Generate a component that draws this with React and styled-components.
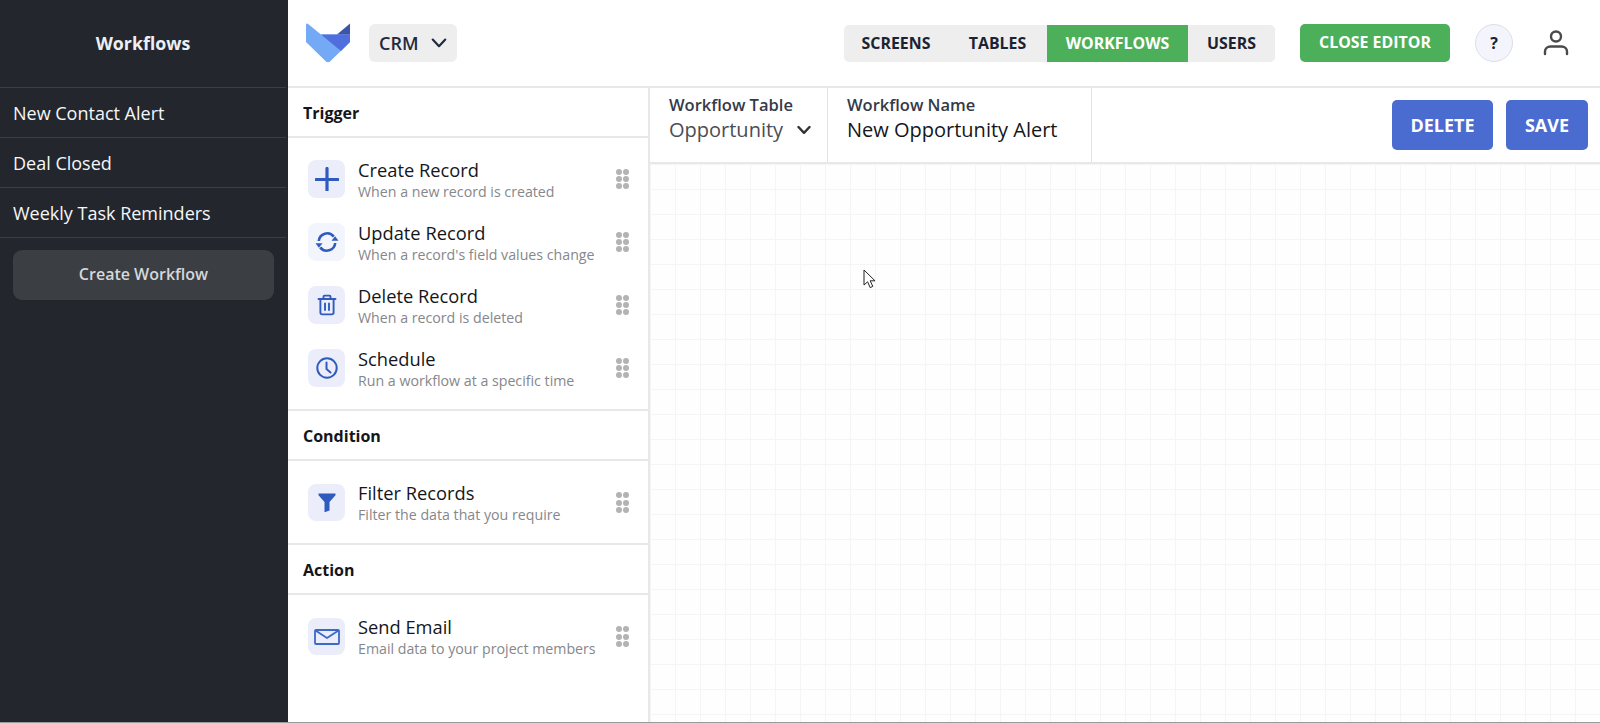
import React from "react";
import styled, { createGlobalStyle } from "styled-components";

const GlobalStyle = createGlobalStyle`
  html, body { margin: 0; padding: 0; height: 100%; background: #fff; }
  body { font-family: "Open Sans", "Liberation Sans", sans-serif; overflow: hidden; }
  * { box-sizing: border-box; }
`;

const Page = styled.div`
  display: flex;
  width: 1600px;
  height: 723px;
  border-bottom: 1px solid #9b9b9b;
`;

const Sidebar = styled.aside`
  width: 288px;
  flex-shrink: 0;
  background: #23262d;
  color: #fff;
`;

const SidebarTitle = styled.div`
  height: 88px;
  padding-bottom: 2px;
  display: flex;
  align-items: center;
  justify-content: center;
  font-size: 17.8px;
  font-weight: 700;
  color: #eceff4;
  border-bottom: 1px solid #3a3e45;
  margin-right: 2px;
`;

const SidebarItem = styled.div`
  height: 50px;
  padding: 0 13px;
  display: flex;
  align-items: center;
  font-size: 18px;
  color: #f5f6f8;
  border-bottom: 1px solid #3a3e45;
  margin-right: 2px;
`;

const CreateButton = styled.div`
  height: 50px;
  margin: 12px 14px 0 13px;
  padding-bottom: 2px;
  display: flex;
  align-items: center;
  justify-content: center;
  background: #3b3e42;
  border-radius: 9px;
  color: #d5d7da;
  font-size: 16px;
  font-weight: 600;
`;

const Main = styled.main`
  flex: 1;
  display: flex;
  flex-direction: column;
  min-width: 0;
`;

const TopBar = styled.header`
  height: 88px;
  flex-shrink: 0;
  display: flex;
  align-items: center;
  padding: 0 31px 0 18px;
  border-bottom: 2px solid #e8e8e8;
`;

const Logo = styled.svg`
  width: 44px;
  height: 40px;
  margin-right: 19px;
  flex-shrink: 0;
`;

const AppSelect = styled.div`
  width: 88px;
  height: 38px;
  padding-left: 10px;
  display: flex;
  align-items: center;
  gap: 12px;
  background: #eeeeee;
  border-radius: 6px;
  color: #1f2a3d;
  font-size: 18px;
  font-weight: 600;
`;

const Tabs = styled.nav`
  margin: 1px 0 0 auto;
  display: flex;
  height: 37px;
  background: #eeeeee;
  border-radius: 5px;
  overflow: hidden;
`;

const Tab = styled.div`
  display: flex;
  align-items: center;
  justify-content: center;
  width: ${(p) => p.$width}px;
  padding-bottom: 1px;
  font-size: 15.9px;
  font-weight: 700;
  color: ${(p) => (p.$active ? "#fff" : "#1b2333")};
  background: ${(p) => (p.$active ? "#4caf5a" : "transparent")};
`;

const CloseEditor = styled.div`
  width: 150px;
  height: 38px;
  margin-left: 25px;
  padding-bottom: 2px;
  display: flex;
  align-items: center;
  justify-content: center;
  background: #4caf5a;
  border-radius: 5px;
  color: #fff;
  font-size: 15.9px;
  font-weight: 700;
`;

const HelpButton = styled.div`
  width: 38px;
  height: 38px;
  margin-left: 25px;
  display: flex;
  align-items: center;
  justify-content: center;
  border: 1px solid #dcdfe8;
  border-radius: 50%;
  background: #f3f4fc;
  color: #1b2333;
  font-size: 16px;
  font-weight: 700;
`;

const UserIcon = styled.svg`
  width: 26px;
  height: 28px;
  margin-left: 30px;
  flex-shrink: 0;
`;

const Body = styled.div`
  flex: 1;
  display: flex;
  min-height: 0;
`;

const Palette = styled.section`
  width: 362px;
  flex-shrink: 0;
  border-right: 2px solid #e8e8e8;
`;

const SectionTitle = styled.div`
  height: 50px;
  padding: 2px 0 0 15px;
  display: flex;
  align-items: center;
  font-size: 16px;
  font-weight: 700;
  color: #14161a;
  border-bottom: 2px solid #e8e8e8;
`;

const Blocks = styled.div`
  display: flex;
  flex-direction: column;
  gap: 25px;
  padding: ${(p) => p.$top}px 0 ${(p) => p.$bottom}px 20px;
  border-bottom: ${(p) => (p.$last ? "0" : "2px solid #e8e8e8")};
`;

const Block = styled.div`
  display: flex;
  align-items: center;
  height: ${(p) => p.$height}px;
`;

const BlockIcon = styled.div`
  width: 37px;
  height: 100%;
  margin-right: 13px;
  flex-shrink: 0;
  display: flex;
  align-items: center;
  justify-content: center;
  background: ${(p) => (p.$light ? "#f3f5fd" : "#ebeefa")};
  border-radius: 8px;
`;

const BlockText = styled.div`
  flex: 1;
  min-width: 0;
  margin-top: ${(p) => p.$nudge}px;
`;

const BlockName = styled.div`
  font-size: 18.3px;
  line-height: 22px;
  color: #14161a;
`;

const BlockHint = styled.div`
  font-size: 14.2px;
  line-height: 22px;
  color: #85878c;
  white-space: nowrap;
`;

const Grip = styled.div`
  width: 13px;
  margin-right: 19px;
  flex-shrink: 0;
  display: grid;
  grid-template-columns: 6px 6px;
  gap: 1.2px 1px;
`;

const GripDot = styled.span`
  width: 6px;
  height: 6px;
  border-radius: 50%;
  background: #b3b3b3;
`;

const Editor = styled.section`
  flex: 1;
  display: flex;
  flex-direction: column;
  min-width: 0;
`;

const EditorBar = styled.div`
  height: 76px;
  flex-shrink: 0;
  display: flex;
  padding-right: 12px;
  border-bottom: 2px solid #e8e8e8;
`;

const Field = styled.div`
  width: ${(p) => p.$width}px;
  padding: 6px 0 0 19px;
  border-right: 1px solid #e3e3e3;
`;

const FieldLabel = styled.div`
  font-size: 16.5px;
  line-height: 22px;
  font-weight: 600;
  color: #333a4a;
`;

const FieldValue = styled.div`
  display: flex;
  align-items: center;
  gap: 14px;
  font-size: 20px;
  line-height: 28px;
  white-space: nowrap;
  color: ${(p) => (p.$muted ? "#4a4d55" : "#14161a")};
`;

const EditorButton = styled.div`
  width: ${(p) => p.$width}px;
  height: 50px;
  margin: 12px 0 0 ${(p) => p.$gap}px;
  display: flex;
  align-items: center;
  justify-content: center;
  background: #4a6bd0;
  border-radius: 5px;
  color: #fff;
  font-size: 18px;
  font-weight: 700;
`;

const Canvas = styled.div`
  flex: 1;
  position: relative;
  background-color: #fefefe;
  background-image:
    linear-gradient(to right, #f5f5f5 1px, transparent 1px),
    linear-gradient(to bottom, #f5f5f5 1px, transparent 1px);
  background-size: 25px 25px;
`;

const Pointer = styled.svg`
  position: absolute;
  left: 213px;
  top: 105px;
  width: 14px;
  height: 20px;
`;

const Chevron = ({ size = 14, stroke = "#1f2a3d", width = 2 }) => (
  <svg width={size} height={size} viewBox="0 0 14 14" fill="none">
    <path d="M1.5 4 7 9.8 12.5 4" stroke={stroke} strokeWidth={width} strokeLinecap="round" strokeLinejoin="round" />
  </svg>
);

const PlusGlyph = () => (
  <svg width="24" height="24" viewBox="0 0 24 24" fill="none">
    <path d="M12 1.5v22M1 12.5h22" stroke="#2f5bbf" strokeWidth="3.2" strokeLinecap="round" />
  </svg>
);

const RefreshGlyph = () => (
  <svg width="24" height="24" viewBox="0 0 24 24" fill="none">
    <path d="M3.8 11a8.4 8.4 0 0 1 15-4.4" stroke="#2f5bbf" strokeWidth="2.6" />
    <path d="M20.2 13a8.4 8.4 0 0 1-15 4.4" stroke="#2f5bbf" strokeWidth="2.6" />
    <path d="M23.5 10.8h-7l3.6-4.6z" fill="#2f5bbf" />
    <path d="M0.5 13.2h7l-3.6 4.6z" fill="#2f5bbf" />
  </svg>
);

const TrashGlyph = () => (
  <svg width="20" height="22" viewBox="0 0 20 22" fill="none" stroke="#2f5bbf" strokeWidth="1.9" strokeLinecap="round" strokeLinejoin="round">
    <path d="M1.5 5h17" />
    <path d="M6.5 5V2.6c0-.6.4-1 1-1h5c.6 0 1 .4 1 1V5" />
    <path d="M3.4 5v13.6c0 1 .8 1.8 1.8 1.8h9.6c1 0 1.8-.8 1.8-1.8V5" />
    <path d="M8 9.5v6.5M12 9.5v6.5" />
  </svg>
);

const ClockGlyph = () => (
  <svg width="22" height="22" viewBox="0 0 22 22" fill="none" stroke="#2f5bbf" strokeWidth="2" strokeLinecap="round" strokeLinejoin="round">
    <circle cx="11" cy="11" r="9.7" />
    <path d="M10.5 5.5V12l4 3.5" />
  </svg>
);

const FunnelGlyph = () => (
  <svg width="18" height="19" viewBox="0 0 18 19" fill="#2f5bbf">
    <path d="M0.5 0.5h17v1.8l-6 6.6v8.6l-5 1.8V8.9l-6-6.6z" />
  </svg>
);

const MailGlyph = () => (
  <svg width="26" height="16" viewBox="0 0 26 16" fill="none" stroke="#3c68c6" strokeWidth="1.8" strokeLinejoin="round">
    <rect x="1" y="1" width="24" height="14" rx="1" />
    <path d="M1.5 1.5 13 9l11.5-7.5" />
  </svg>
);

const triggerBlocks = [
  { name: "Create Record", hint: "When a new record is created", icon: <PlusGlyph /> },
  { name: "Update Record", hint: "When a record's field values change", icon: <RefreshGlyph />, light: true },
  { name: "Delete Record", hint: "When a record is deleted", icon: <TrashGlyph /> },
  { name: "Schedule", hint: "Run a workflow at a specific time", icon: <ClockGlyph /> },
];

const conditionBlocks = [
  { name: "Filter Records", hint: "Filter the data that you require", icon: <FunnelGlyph /> },
];

const actionBlocks = [
  { name: "Send Email", hint: "Email data to your project members", icon: <MailGlyph /> },
];

const BlockList = ({ items, last, top = 23, bottom = 22, height = 37, nudge = 3 }) => (
  <Blocks $last={last} $top={top} $bottom={bottom}>
    {items.map((item) => (
      <Block key={item.name} $height={height}>
        <BlockIcon $light={item.light}>{item.icon}</BlockIcon>
        <BlockText $nudge={nudge}>
          <BlockName>{item.name}</BlockName>
          <BlockHint>{item.hint}</BlockHint>
        </BlockText>
        <Grip>
          {[0, 1, 2, 3, 4, 5].map((n) => (
            <GripDot key={n} />
          ))}
        </Grip>
      </Block>
    ))}
  </Blocks>
);

const App = () => {
  return (
    <Page>
      <GlobalStyle />
      <Sidebar>
        <SidebarTitle>Workflows</SidebarTitle>
        <SidebarItem>New Contact Alert</SidebarItem>
        <SidebarItem>Deal Closed</SidebarItem>
        <SidebarItem>Weekly Task Reminders</SidebarItem>
        <CreateButton>Create Workflow</CreateButton>
      </Sidebar>
      <Main>
        <TopBar>
          <Logo viewBox="0 0 44 40">
            <path d="M1.5 0.5 15 11.5H44V19L24 38.5Q22 40 20 38.5L0 19V2Q0 0 1.5 0.5z" fill="#74a9f6" />
            <path d="M15 11.5H44V19L35 28z" fill="#4f6fdf" />
            <path d="M31 11.5 44 0.5V11.5z" fill="#3d55a8" />
          </Logo>
          <AppSelect>
            CRM
            <Chevron size={16} width={1.9} />
          </AppSelect>
          <Tabs>
            <Tab $width={104}>SCREENS</Tab>
            <Tab $width={99}>TABLES</Tab>
            <Tab $width={141} $active>WORKFLOWS</Tab>
            <Tab $width={87}>USERS</Tab>
          </Tabs>
          <CloseEditor>CLOSE EDITOR</CloseEditor>
          <HelpButton>?</HelpButton>
          <UserIcon viewBox="0 0 26 28" fill="none" stroke="#4a4a4a" strokeWidth="2.4" strokeLinecap="round">
            <circle cx="13" cy="7.5" r="5" />
            <path d="M2 25v-2.5c0-3 2.5-5 5.5-5h11c3 0 5.5 2 5.5 5V25" />
          </UserIcon>
        </TopBar>
        <Body>
          <Palette>
            <SectionTitle>Trigger</SectionTitle>
            <BlockList items={triggerBlocks} top={22} height={38} nudge={4} />
            <SectionTitle>Condition</SectionTitle>
            <BlockList items={conditionBlocks} />
            <SectionTitle>Action</SectionTitle>
            <BlockList items={actionBlocks} last />
          </Palette>
          <Editor>
            <EditorBar>
              <Field $width={178}>
                <FieldLabel>Workflow Table</FieldLabel>
                <FieldValue $muted>
                  Opportunity
                  <Chevron size={14} stroke="#333" width={2.4} />
                </FieldValue>
              </Field>
              <Field $width={264}>
                <FieldLabel>Workflow Name</FieldLabel>
                <FieldValue>New Opportunity Alert</FieldValue>
              </Field>
              <EditorButton $width={101} $gap={300}>DELETE</EditorButton>
              <EditorButton $width={82} $gap={13}>SAVE</EditorButton>
            </EditorBar>
            <Canvas>
              <Pointer viewBox="0 0 14 20">
                <path d="M1 1v15l3.6-3.2 2.6 5.8 2.6-1.2-2.6-5.6H12z" fill="#fff" stroke="#222" strokeWidth="1" strokeLinejoin="round" />
              </Pointer>
            </Canvas>
          </Editor>
        </Body>
      </Main>
    </Page>
  );
};

export default App;
